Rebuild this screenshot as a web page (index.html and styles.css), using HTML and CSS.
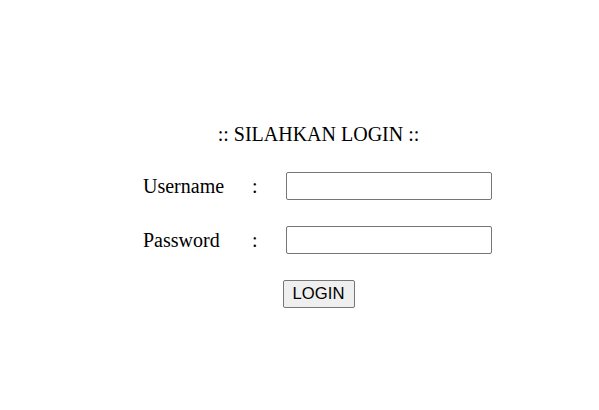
FILE: index.html
```html
<!DOCTYPE html>
<html>
<head>
<meta charset="utf-8">
<title>Login</title>
<link rel="stylesheet" href="styles.css">
</head>
<body>
<form class="login">
  <div class="title">:: SILAHKAN LOGIN ::</div>
  <label class="label" for="u">Username</label>
  <span class="colon">:</span>
  <input class="field" id="u" type="text">
  <label class="label" for="p">Password</label>
  <span class="colon">:</span>
  <input class="field" id="p" type="password">
  <div class="actions"><button class="btn" type="button">LOGIN</button></div>
</form>
</body>
</html>
```
FILE: styles.css
```css
html, body {
  margin: 0;
  padding: 0;
  background: #fff;
}
body {
  font-family: "Liberation Serif", "Times New Roman", serif;
  font-size: 20px;
  color: #000;
}
.login {
  display: grid;
  grid-template-columns: 109px 34px 206px;
  row-gap: 26px;
  align-items: center;
  margin: 0 0 0 143px;
  padding-top: 123px;
  width: 349px;
}
.title {
  grid-column: 1 / -1;
  text-align: center;
  line-height: 23px;
  padding-left: 2px;
}
.label {
  line-height: 23px;
}
.colon {
  line-height: 23px;
}
.field {
  box-sizing: border-box;
  width: 206px;
  height: 28px;
  margin: 0;
  border: 1px solid #767676;
  border-radius: 2px;
  background: #fff;
  padding: 2px 3px;
  font-family: "Liberation Sans", Arial, sans-serif;
  font-size: 16px;
}
.actions {
  grid-column: 1 / -1;
  display: flex;
  justify-content: center;
  padding-left: 2px;
}
.btn {
  box-sizing: border-box;
  width: 72px;
  height: 28px;
  margin: 0;
  padding: 0 6px;
  border: 1px solid #767676;
  border-radius: 2px;
  background: #efefef;
  font-family: "Liberation Sans", Arial, sans-serif;
  font-size: 16.67px;
  color: #000;
}
```
